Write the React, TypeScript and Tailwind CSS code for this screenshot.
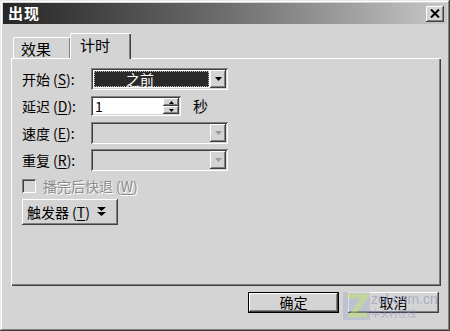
import React from 'react';

const FONT = { fontFamily: '"SimSun", "Noto Sans CJK SC", "Liberation Sans", sans-serif' };

const raised = 'bg-[#d4d4d4] shadow-[inset_-1px_-1px_0_#404040,inset_1px_1px_0_#ffffff,inset_-2px_-2px_0_#808080]';
const sunken = 'shadow-[inset_1px_1px_0_#808080,inset_-1px_-1px_0_#ffffff,inset_2px_2px_0_#404040,inset_-2px_-2px_0_#d4d4d4]';

const Key: React.FC<{ k: string }> = ({ k }) => (
    <span className="ml-[3px]">(<span className="underline underline-offset-2">{k}</span>)</span>
);

const Arrow: React.FC<{ disabled?: boolean }> = ({ disabled }) => (
    <div className={`w-[16px] h-full flex items-center justify-center ${raised}`}>
        <svg width="7" height="4" viewBox="0 0 7 4">
            <path d="M0 0h7L3.5 4z" fill={disabled ? '#9a9a9a' : '#000'} />
        </svg>
    </div>
);

const Combo: React.FC<{ value?: string; disabled?: boolean }> = ({ value, disabled }) => (
    <div className={`w-[137px] h-[22px] p-[2px] flex ${disabled ? 'bg-[#d4d4d4]' : 'bg-white'} ${sunken}`}>
        <div className="flex-1 p-[1px]">
            {value && (
                <div className="h-full bg-[#2a2a2a] outline-1 outline-dotted outline-[#bbbbbb] -outline-offset-1 text-white text-[14px] leading-[16px] pl-[32px]">
                    {value}
                </div>
            )}
        </div>
        <Arrow disabled={disabled} />
    </div>
);

const Row: React.FC<{ label: string; k: string; children: React.ReactNode }> = ({ label, k, children }) => (
    <div className="flex items-center h-[22px]">
        <div className="w-[69px] text-[14px] text-black whitespace-nowrap">
            {label}<Key k={k} />:
        </div>
        {children}
    </div>
);

export default function App() {
    return (
        <div style={FONT} className="relative w-[450px] h-[331px] bg-[#d4d4d4] p-[3px] shadow-[inset_-1px_-1px_0_#404040,inset_1px_1px_0_#e8e8e8,inset_-2px_-2px_0_#808080,inset_2px_2px_0_#ffffff] flex flex-col overflow-hidden select-none">
            {/* Title bar */}
            <div className="h-[21px] flex items-center justify-between pl-[5px] pr-[3px] bg-gradient-to-r from-[#262626] via-[#6e6e6e] to-[#c8c8c8]">
                <span className="text-white font-bold text-[15px] tracking-[1px]">出现</span>
                <div className={`w-[18px] h-[16px] flex items-center justify-center ${raised}`}>
                    <svg width="10" height="9" viewBox="0 0 10 9">
                        <path d="M1 0.5L9 8.5M9 0.5L1 8.5" stroke="#000" strokeWidth="2" />
                    </svg>
                </div>
            </div>

            {/* Tabs */}
            <div className="flex items-end h-[34px] pl-[10px]">
                <div className="w-[57px] h-[21px] border-t border-l border-white rounded-tl-[2px] pl-[7px] text-[15px] leading-[22px] text-black shadow-[inset_-1px_0_0_#808080]">
                    效果
                </div>
                <div className="relative z-10 w-[61px] h-[26px] -mb-[1px] bg-[#d4d4d4] border-t border-l border-white rounded-tl-[2px] shadow-[inset_-1px_0_0_#404040,inset_-2px_0_0_#808080] pl-[9px] text-[15px] leading-[22px] text-black">
                    计时
                </div>
            </div>

            {/* Panel */}
            <div className="ml-[8px] mr-[6px] h-[228px] border-t border-l border-white shadow-[inset_-1px_-1px_0_#404040,inset_-2px_-2px_0_#808080] pl-[10px] pt-[9px] flex flex-col">
                <div className="flex flex-col gap-[5px]">
                    <Row label="开始" k="S">
                        <Combo value="之前" />
                    </Row>
                    <Row label="延迟" k="D">
                        <div className={`w-[90px] h-[20px] bg-white p-[2px] flex ${sunken}`}>
                            <div className="flex-1 text-[14px] leading-[16px] pl-[2px] text-black">1</div>
                            <div className="w-[16px] flex flex-col">
                                <div className={`flex-1 flex items-center justify-center ${raised}`}>
                                    <svg width="5" height="3" viewBox="0 0 5 3"><path d="M2.5 0L5 3H0z" fill="#000" /></svg>
                                </div>
                                <div className={`flex-1 flex items-center justify-center ${raised}`}>
                                    <svg width="5" height="3" viewBox="0 0 5 3"><path d="M0 0h5L2.5 3z" fill="#000" /></svg>
                                </div>
                            </div>
                        </div>
                        <span className="ml-[12px] text-[15px] text-black">秒</span>
                    </Row>
                    <Row label="速度" k="E">
                        <Combo disabled />
                    </Row>
                    <Row label="重复" k="R">
                        <Combo disabled />
                    </Row>
                </div>

                {/* Checkbox */}
                <div className="flex items-center mt-[7px] h-[16px]">
                    <div className={`w-[14px] h-[14px] bg-[#d4d4d4] ${sunken}`} />
                    <span className="ml-[7px] text-[14px] text-[#8c8c8c] [text-shadow:1px_1px_0_#ffffff]">
                        播完后快退<Key k="W" />
                    </span>
                </div>

                {/* Trigger button */}
                <div className={`mt-[5px] w-[96px] h-[26px] flex items-center pl-[5px] text-[14px] text-black ${raised}`}>
                    触发器<Key k="T" />
                    <svg className="ml-[7px]" width="9" height="10" viewBox="0 0 9 10">
                        <path d="M0 0h9L4.5 4z M0 5h9L4.5 9z" fill="#000" />
                    </svg>
                </div>
            </div>

            {/* Footer buttons */}
            <div className="flex justify-end gap-[9px] pr-[8px] pt-[6px]">
                <div className="w-[91px] h-[21px] border border-black flex">
                    <div className={`flex-1 flex items-center justify-center text-[14px] text-black ${raised}`}>确定</div>
                </div>
                <div className={`w-[91px] h-[21px] flex items-center justify-center text-[14px] text-black ${raised}`}>取消</div>
            </div>

            {/* Watermark */}
            <div className="absolute left-[343px] top-[292px] pointer-events-none opacity-60 flex items-start">
                <svg width="27" height="28" viewBox="0 0 27 28">
                    <rect x="0" y="0" width="27" height="28" fill="#8e97c4" opacity="0.5" />
                    <path d="M4 4h19L9 23h15" stroke="#b9d67a" strokeWidth="5" fill="none" />
                </svg>
                <div className="ml-[1px] flex flex-col leading-none">
                    <span className="text-[14px] text-[#8e94c0] font-['Liberation_Sans']">zol.com.cn</span>
                    <span className="text-[9px] text-[#8e94c0] mt-[3px]">中关村在线</span>
                </div>
            </div>
        </div>
    );
}
